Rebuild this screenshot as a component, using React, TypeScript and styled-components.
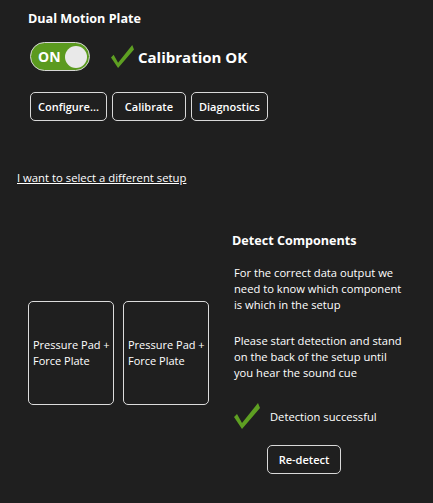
import React from "react";
import styled, { createGlobalStyle } from "styled-components";

const GlobalStyle = createGlobalStyle`
  html, body {
    margin: 0;
    padding: 0;
    background: #1f1f1f;
  }
  body {
    font-family: "Open Sans", "Noto Sans", "DejaVu Sans", sans-serif;
    color: #ffffff;
  }
`;

const Page = styled.div`
  width: 433px;
  height: 503px;
  box-sizing: border-box;
  padding: 10px 0 0 0;
  display: flex;
  flex-direction: column;
`;

const TopSection = styled.section`
  padding-left: 28px;
  display: flex;
  flex-direction: column;
`;

const Title = styled.h2`
  margin: 0;
  font-size: 12.6px;
  font-weight: 700;
  line-height: 18px;
`;

const StatusRow = styled.div`
  display: flex;
  align-items: center;
  margin-top: 14px;
  margin-left: 2px;
  gap: 21px;
`;

const Toggle = styled.button`
  width: 60px;
  height: 29px;
  box-sizing: border-box;
  border-radius: 15px;
  border: 1.5px solid #d6d6d6;
  background: #5b9a1f;
  display: flex;
  align-items: center;
  justify-content: space-between;
  padding: 0 2px 0 7px;
  cursor: pointer;
  color: #ffffff;
  font-family: inherit;
  font-weight: 700;
  font-size: 14px;
`;

const Knob = styled.span`
  width: 22px;
  height: 22px;
  border-radius: 50%;
  background: #e9e9e9;
`;

const CalibStatus = styled.div`
  display: flex;
  align-items: center;
  gap: 4px;
  font-size: 15px;
  font-weight: 700;
`;

const ButtonRow = styled.div`
  display: flex;
  gap: 5px;
  margin-top: 21px;
  margin-left: 2px;
`;

const OutlineButton = styled.button`
  height: 29px;
  min-width: 74px;
  box-sizing: border-box;
  padding: 0 7px;
  background: transparent;
  border: 1px solid #d9d9d9;
  border-radius: 5px;
  color: #ffffff;
  font-family: inherit;
  font-size: 11px;
  font-weight: 600;
  cursor: pointer;
`;

const SetupLink = styled.a`
  margin: 49px 0 0 17px;
  font-size: 11.3px;
  color: #ffffff;
  text-decoration: underline;
  cursor: pointer;
  align-self: flex-start;
`;

const DetectArea = styled.div`
  display: flex;
  align-items: center;
  margin-top: 47px;
  padding-left: 28px;
`;

const Cards = styled.div`
  display: flex;
  gap: 9px;
`;

const Card = styled.div`
  width: 86px;
  height: 104px;
  box-sizing: border-box;
  border: 1px solid #dcdcdc;
  border-radius: 5px;
  display: flex;
  align-items: center;
  padding: 0 0 0 4px;
  font-size: 11px;
  line-height: 16px;
`;

const DetectPanel = styled.div`
  margin-left: 23px;
  width: 180px;
  display: flex;
  flex-direction: column;
`;

const PanelTitle = styled.h3`
  margin: 0;
  font-size: 12.6px;
  font-weight: 700;
  line-height: 18px;
`;

const Paragraph = styled.p<{ $top: number }>`
  margin: ${(p) => p.$top}px 0 0 2px;
  max-width: 170px;
  font-size: 11.2px;
  line-height: 16px;
`;

const SuccessRow = styled.div`
  display: flex;
  align-items: center;
  gap: 10px;
  margin: 22px 0 0 2px;
  font-size: 11.2px;
`;

const RedetectButton = styled(OutlineButton)`
  align-self: flex-start;
  margin: 16px 0 0 35px;
  padding: 0 10px;
`;

const Check = ({ size }: { size: number }) => (
  <svg width={size} height={size} viewBox="0 0 26 26">
    <polygon
      points="0,14 3,11 8,20 24,0 26,5 8,26"
      fill="#5e9f22"
    />
  </svg>
);

export default function App() {
  return (
    <Page>
      <GlobalStyle />
      <TopSection>
        <Title>Dual Motion Plate</Title>
        <StatusRow>
          <Toggle>
            ON
            <Knob />
          </Toggle>
          <CalibStatus>
            <Check size={23} />
            Calibration OK
          </CalibStatus>
        </StatusRow>
        <ButtonRow>
          <OutlineButton>Configure...</OutlineButton>
          <OutlineButton>Calibrate</OutlineButton>
          <OutlineButton>Diagnostics</OutlineButton>
        </ButtonRow>
      </TopSection>
      <SetupLink>I want to select a different setup</SetupLink>
      <DetectArea>
        <Cards>
          <Card>Pressure Pad + Force Plate</Card>
          <Card>Pressure Pad + Force Plate</Card>
        </Cards>
        <DetectPanel>
          <PanelTitle>Detect Components</PanelTitle>
          <Paragraph $top={15}>
            For the correct data output we need to know which component is which in the setup
          </Paragraph>
          <Paragraph $top={20}>
            Please start detection and stand on the back of the setup until you hear the sound cue
          </Paragraph>
          <SuccessRow>
            <Check size={26} />
            Detection successful
          </SuccessRow>
          <RedetectButton>Re-detect</RedetectButton>
        </DetectPanel>
      </DetectArea>
    </Page>
  );
}
